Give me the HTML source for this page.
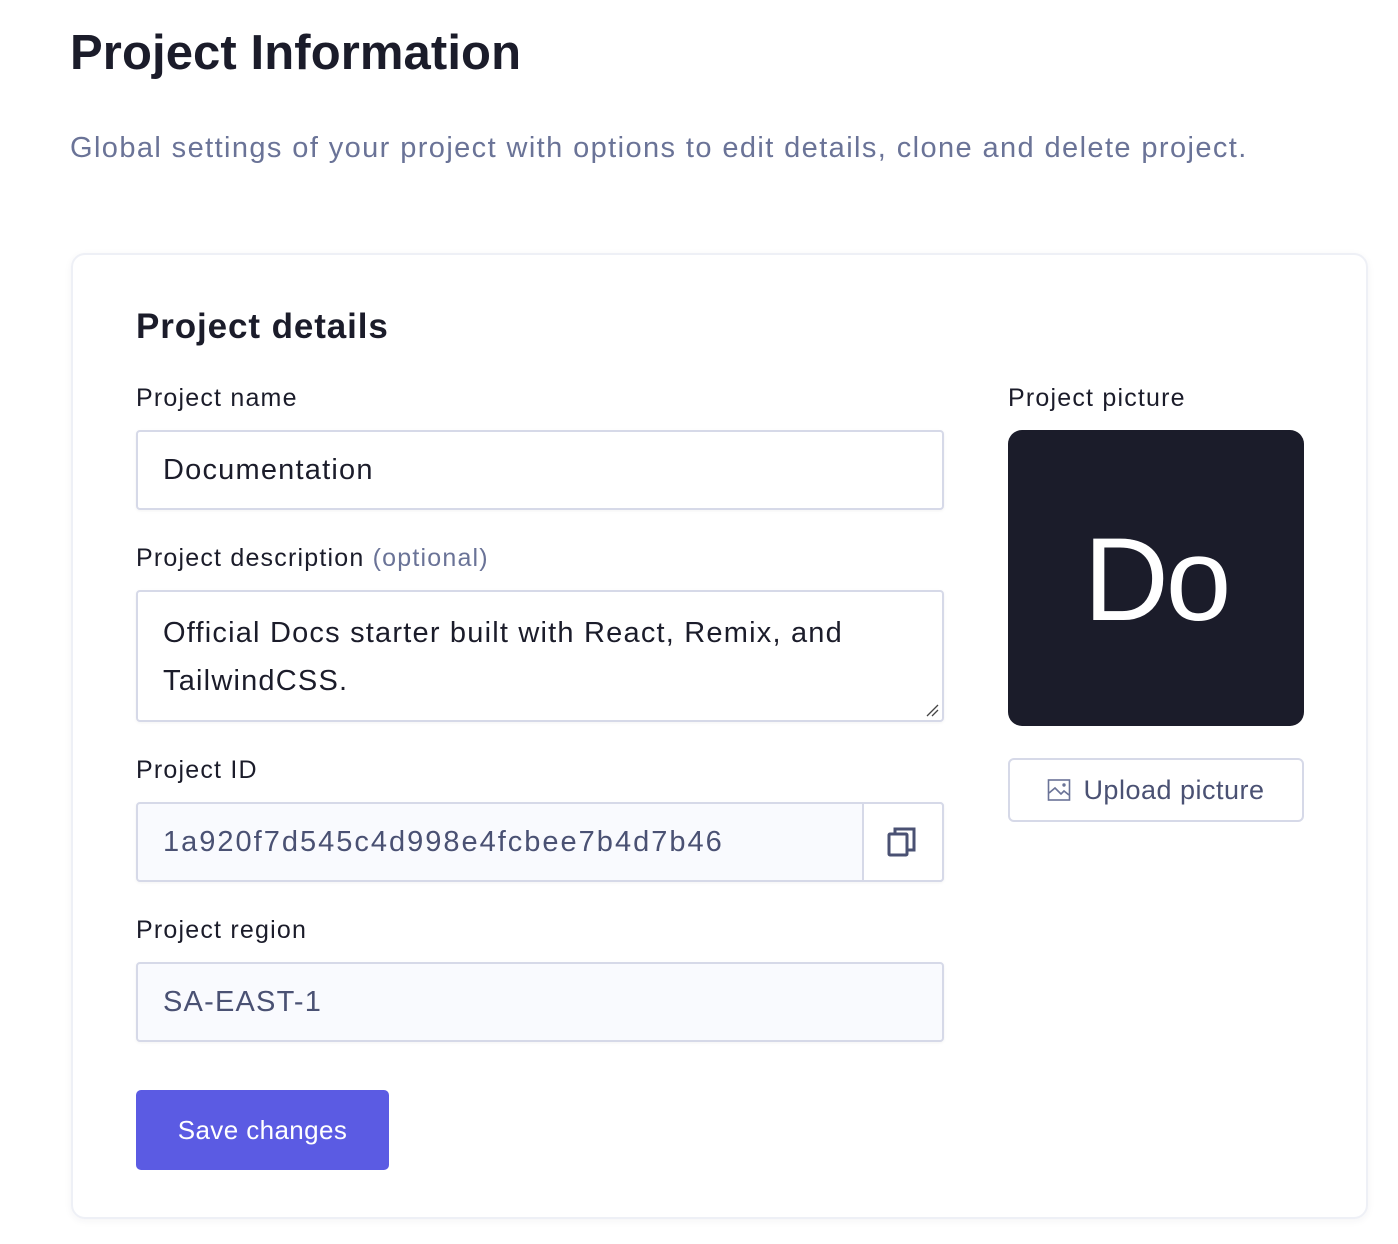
<!DOCTYPE html>
<html><head><meta charset="utf-8"><style>
*{box-sizing:border-box;margin:0;padding:0}
body{width:1398px;height:1244px;background:#fff;font-family:"Liberation Sans",sans-serif;color:#1b1c2a;position:relative;overflow:hidden}
.abs{position:absolute}
h1{position:absolute;left:70px;top:25px;font-size:49px;font-weight:700;letter-spacing:0.1px}
.sub{left:70px;top:132px;font-size:29px;color:#6a7397;letter-spacing:1.4px}
.card{left:71px;top:253px;width:1297px;height:966px;border:2px solid #eef0f6;border-radius:14px;box-shadow:0 2px 8px rgba(30,40,80,.05)}
h2{position:absolute;left:136px;top:307px;font-size:35px;font-weight:700;letter-spacing:0.9px}
.lbl{font-size:25px;color:#1b1c2a;letter-spacing:1.2px}
.inp{border:2px solid #d6d9e8;border-radius:4px;font-size:29px;padding-left:25px;display:flex;align-items:center;box-shadow:0 1px 3px rgba(0,0,0,.05);letter-spacing:1.2px}
.ro{background:#f9fafe;color:#4a5173}
</style></head><body>
<h1>Project Information</h1>
<div class="abs sub">Global settings of your project with options to edit details, clone and delete project.</div>
<div class="abs card"></div>
<h2>Project details</h2>
<div class="abs lbl" style="left:136px;top:384px">Project name</div>
<div class="abs inp" style="left:136px;top:430px;width:808px;height:80px">Documentation</div>
<div class="abs lbl" style="left:136px;top:544px">Project description <span style="color:#6a7397">(optional)</span></div>
<div class="abs inp" style="left:136px;top:590px;width:808px;height:132px;padding-top:17px;line-height:48px;display:block">Official Docs starter built with React, Remix, and TailwindCSS.
<svg class="abs" style="right:3px;bottom:3px" width="14" height="14"><path d="M2 13L13 2M7 13L13 7" stroke="#444" stroke-width="1.3"/></svg></div>
<div class="abs lbl" style="left:136px;top:756px">Project ID</div>
<div class="abs inp ro" style="left:136px;top:802px;width:808px;height:80px;letter-spacing:2px">1a920f7d545c4d998e4fcbee7b4d7b46</div>
<div class="abs" style="left:862px;top:802px;width:82px;height:80px;border:2px solid #d6d9e8;border-radius:0 4px 4px 0;background:#fff;display:flex;align-items:center;justify-content:center">
<svg width="34" height="34" viewBox="0 0 34 34"><rect x="3" y="9" width="18" height="21" rx="1" fill="none" stroke="#4a5173" stroke-width="3"/><path d="M9 9V4h19v21h-7" fill="none" stroke="#4a5173" stroke-width="3"/></svg></div>
<div class="abs lbl" style="left:136px;top:916px">Project region</div>
<div class="abs inp ro" style="left:136px;top:962px;width:808px;height:80px">SA-EAST-1</div>
<div class="abs" style="left:136px;top:1090px;width:253px;height:80px;background:#5b5be3;border-radius:5px;color:#fff;font-size:26px;display:flex;align-items:center;justify-content:center;letter-spacing:0.4px">Save changes</div>
<div class="abs lbl" style="left:1008px;top:384px">Project picture</div>
<div class="abs" style="left:1008px;top:430px;width:296px;height:296px;background:#1b1c2a;border-radius:14px;color:#fff;font-size:118px;display:flex;align-items:center;justify-content:center;letter-spacing:-3px;padding-top:4px">Do</div>
<div class="abs" style="left:1008px;top:758px;width:296px;height:64px;border:2px solid #d6d9e8;border-radius:6px;display:flex;align-items:center;justify-content:center;font-size:27px;color:#4a5173;gap:12px;letter-spacing:0.5px">
<svg width="24" height="24" viewBox="0 0 24 24"><rect x="1.5" y="2" width="21" height="20" fill="none" stroke="#6a7397" stroke-width="1.6"/><path d="M2 15l6-5 6 6 3-3 5 4" fill="none" stroke="#6a7397" stroke-width="1.6"/><circle cx="17" cy="7" r="1.7" fill="#6a7397"/></svg>Upload picture</div>
</body></html>
